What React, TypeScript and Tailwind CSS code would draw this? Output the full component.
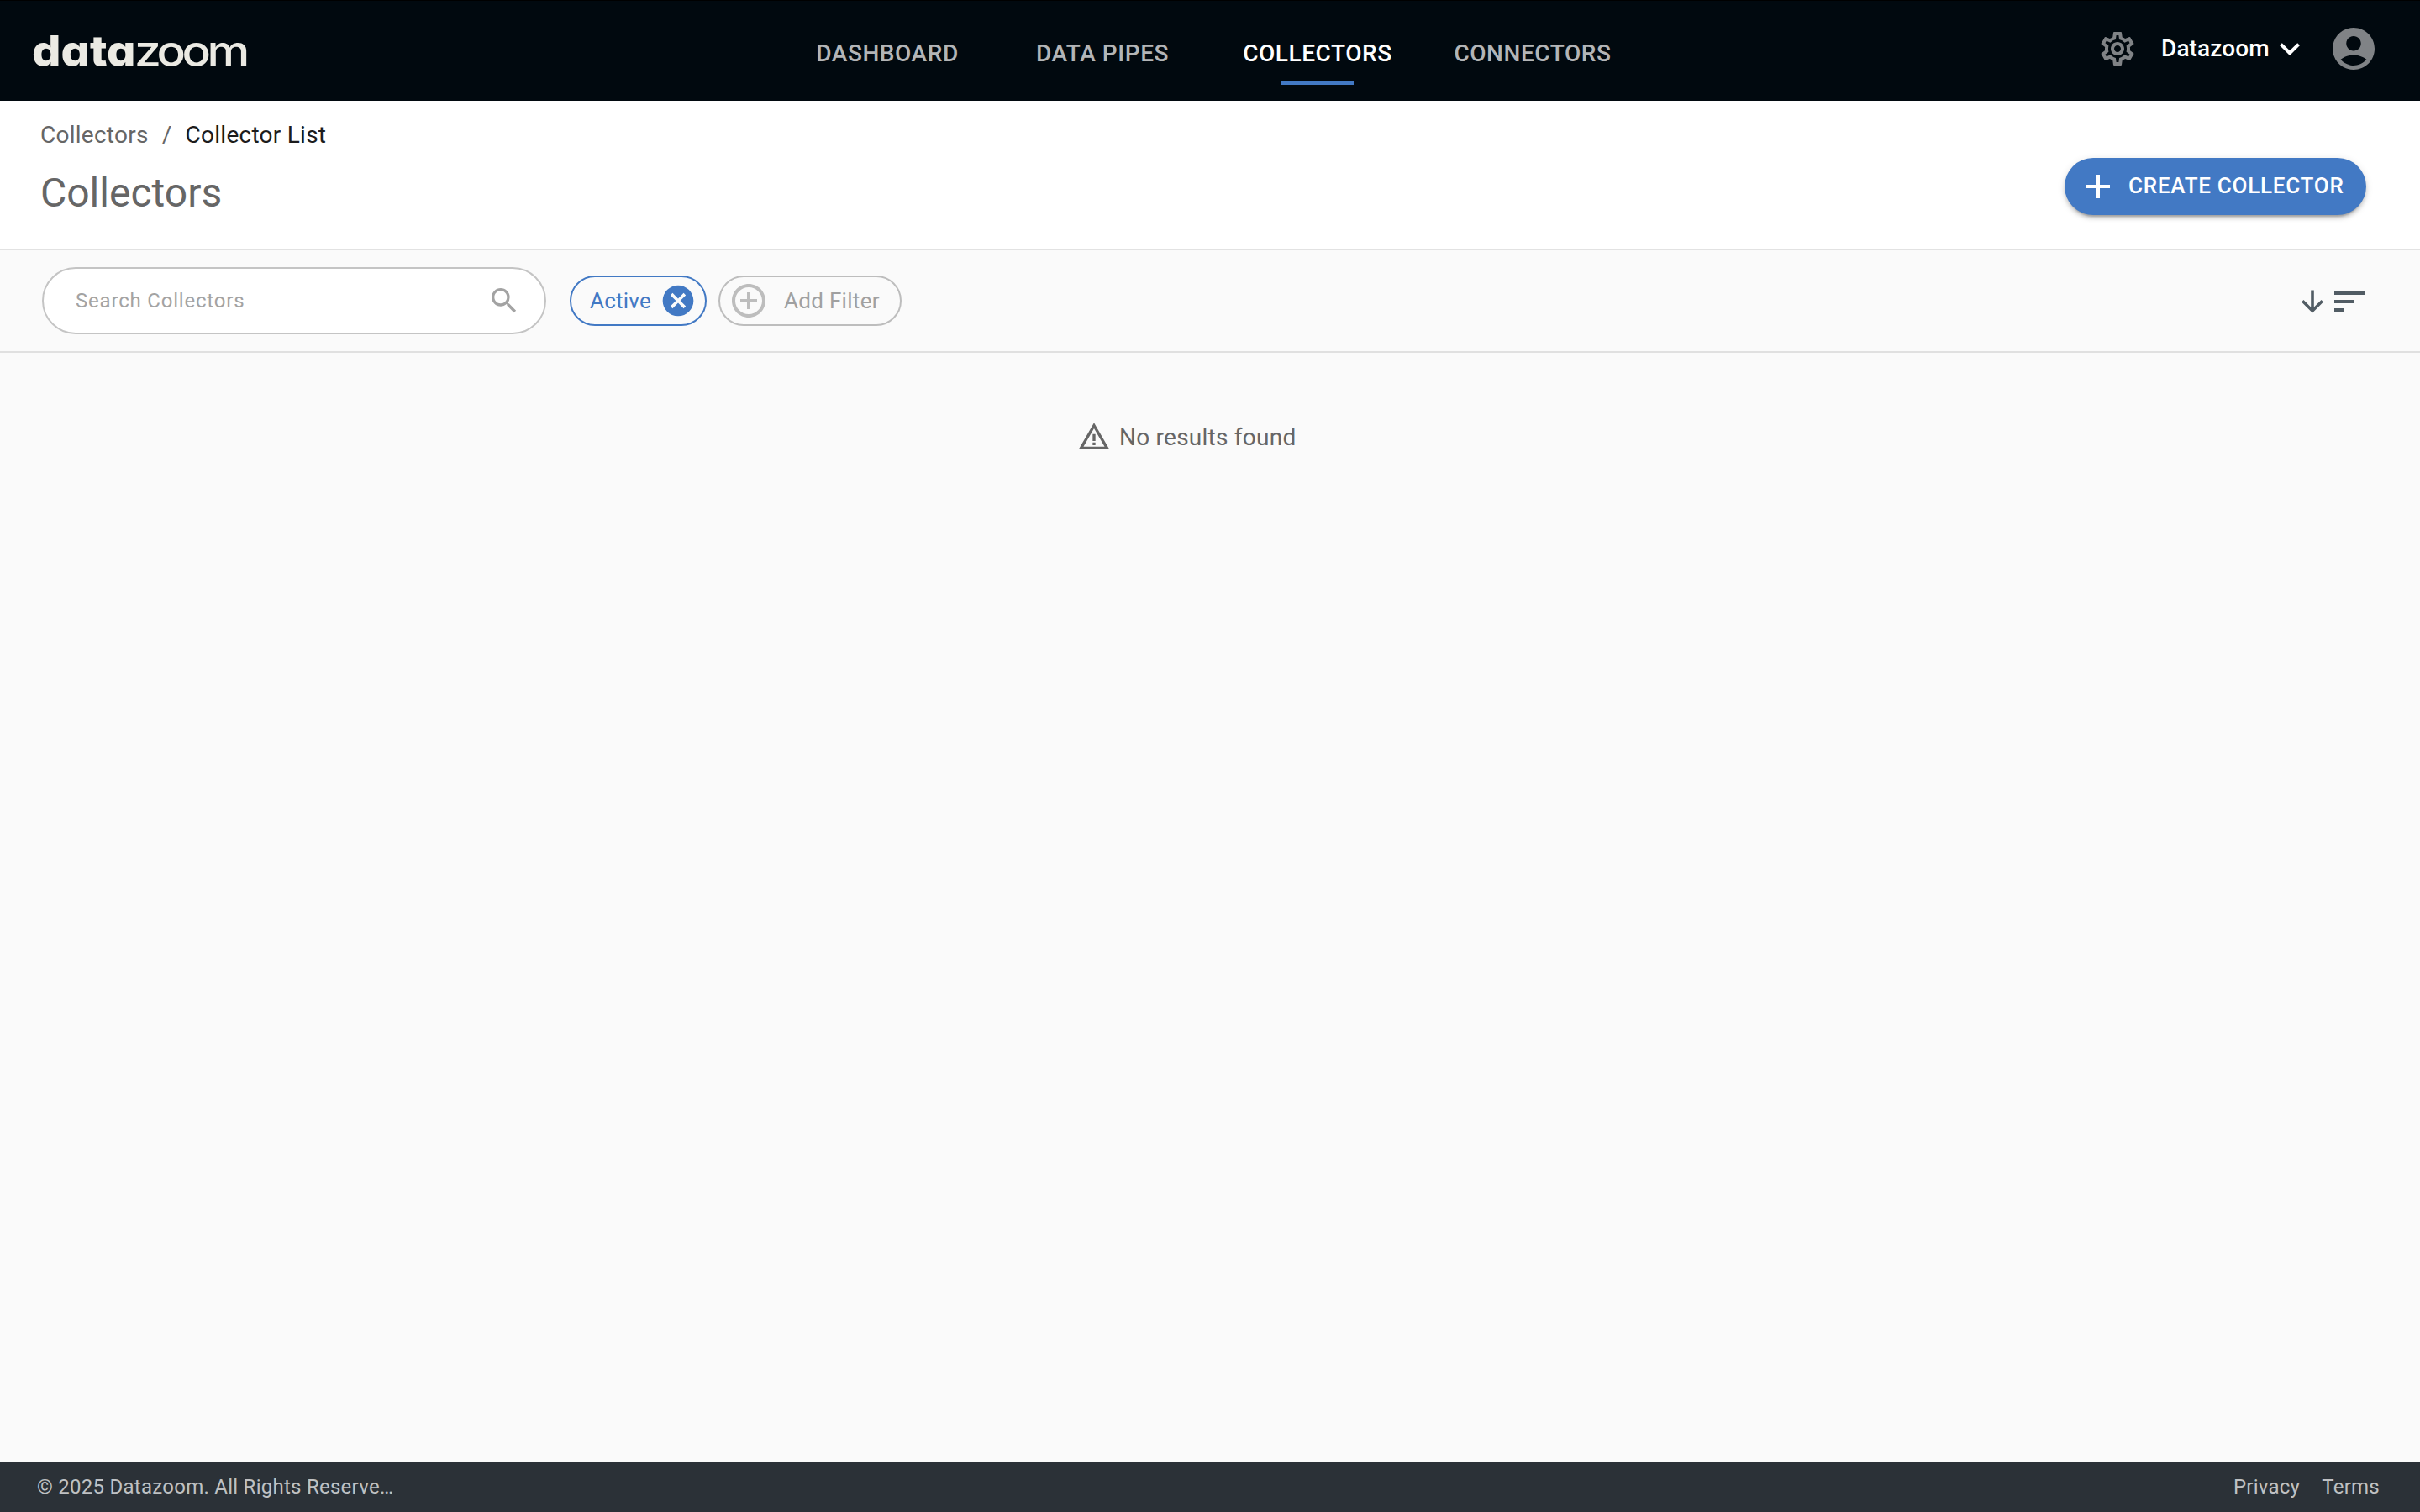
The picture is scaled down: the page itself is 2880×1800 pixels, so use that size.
import React from 'react';
import {
  MdAdd,
  MdAddCircleOutline,
  MdCancel,
  MdExpandMore,
  MdOutlineSettings,
  MdSearch,
  MdSort,
  MdWarningAmber,
} from 'react-icons/md';

const tabs = ['Dashboard', 'Data Pipes', 'Collectors', 'Connectors'];

// cv11 gives Inter a single-storey "a"
const Logo: React.FC = () => (
  <div className="flex font-[Inter,sans-serif] text-[51px] leading-[60px] text-[#ebeae3] [font-feature-settings:'cv11']">
    <span className="w-[122px] origin-left scale-x-[1.06] font-extrabold">data</span>
    <span className="origin-left scale-x-[1.12] font-medium tracking-[-4px]">zoom</span>
  </div>
);

const AccountIcon: React.FC = () => (
  <svg viewBox="0 0 24 24" className="h-[60px] w-[60px] fill-[#808386]">
    <path d="M12 2C6.48 2 2 6.48 2 12s4.48 10 10 10 10-4.48 10-10S17.52 2 12 2zm0 4c1.93 0 3.5 1.57 3.5 3.5S13.93 13 12 13s-3.5-1.57-3.5-3.5S10.07 6 12 6zm0 14c-2.03 0-4.43-.82-6.14-2.88C7.55 15.8 9.68 15 12 15s4.45.8 6.14 2.12C16.43 19.18 14.03 20 12 20z" />
  </svg>
);

const ArrowDownIcon: React.FC = () => (
  <svg viewBox="0 0 26 28" className="h-7 w-[26px]" fill="none" stroke="currentColor" strokeWidth="3.6">
    <path d="M13 0.5V25M1.2 13.2L13 25l11.8-11.8" />
  </svg>
);

const Header: React.FC = () => (
  <header className="grid h-[120px] shrink-0 grid-cols-[928px_1024px_928px] border-t border-black bg-[#01090f]">
    <div className="pl-[38px] pt-[30px]">
      <Logo />
    </div>

    <nav className="grid grid-cols-4">
      {tabs.map((tab) => {
        const active = tab === 'Collectors';
        return (
          <a
            key={tab}
            className={`flex flex-col items-center pt-[43px] text-[28px] font-medium uppercase leading-[40px] tracking-[0.56px] ${
              active ? 'text-white' : 'text-[#b3b5b7]'
            }`}
          >
            {tab}
            {active && <span className="mt-3 h-[5px] w-[86px] bg-[#4279c4]" />}
          </a>
        );
      })}
    </nav>

    <div className="flex h-[114px] items-center justify-end pr-[49px]">
      <MdOutlineSettings className="h-12 w-12 text-[#808386]" />
      <div className="ml-[27px] flex items-center text-[28px] font-medium text-white">
        <span className="w-[130px] pl-px tracking-[0.1px]">Datazoom</span>
        <MdExpandMore className="h-12 w-12" />
      </div>
      <div className="ml-[22px]">
        <AccountIcon />
      </div>
    </div>
  </header>
);

const PageTitle: React.FC = () => (
  <section className="flex h-[178px] shrink-0 justify-between border-b-2 border-[#e2e2e2] bg-white pl-12 pr-16">
    <div>
      <div className="flex pt-[21px] text-[28px] leading-[40px] tracking-[0.26px] text-[#666666]">
        <a>Collectors</a>
        <span className="mx-4">/</span>
        <span className="text-[#1c1c1c]">Collector List</span>
      </div>
      <h1 className="mt-[21px] text-[48px] leading-[56px] text-[#666666]">Collectors</h1>
    </div>
    <button className="mt-[68px] flex h-[68px] w-[359px] items-center rounded-full bg-[#4279c4] pl-4 text-[26px] font-medium uppercase tracking-[0.74px] text-white shadow-[0_6px_2px_-4px_rgba(0,0,0,0.2),0_4px_4px_rgba(0,0,0,0.14),0_2px_10px_rgba(0,0,0,0.12)]">
      <MdAdd className="h-12 w-12" />
      <span className="ml-3 -mt-0.5 whitespace-nowrap">Create Collector</span>
    </button>
  </section>
);

const FilterBar: React.FC = () => (
  <section className="flex h-[122px] shrink-0 items-center border-b-2 border-[#e0e0e0] pl-[50px] pr-[60px]">
    <div className="flex h-20 w-[600px] items-center justify-between rounded-full border-2 border-[#c4c4c4] bg-white pl-[38px] pr-7 text-[#a3a3a3]">
      <span className="text-[24px] tracking-[0.8px]">Search Collectors</span>
      <MdSearch className="h-10 w-10" />
    </div>
    <div className="ml-7 flex h-[60px] w-[163px] items-center justify-between rounded-full border-2 border-[#4279c4] pl-[22px] pr-2.5 text-[26px] tracking-[0.24px] text-[#4279c4]">
      <span>Active</span>
      <MdCancel className="h-11 w-11" />
    </div>
    <div className="ml-3.5 flex h-[60px] w-[218px] items-center rounded-full border-2 border-[#bdbdbd] pl-2.5 text-[26px] tracking-[0.3px] text-[#a0a0a0]">
      <MdAddCircleOutline className="h-12 w-12 text-[#bdbdbd]" />
      <span className="ml-[18px] whitespace-nowrap">Add Filter</span>
    </div>
    <div className="ml-auto flex items-center gap-[7px] pt-0.5 text-[#515c64]">
      <ArrowDownIcon />
      <MdSort className="h-12 w-12" />
    </div>
  </section>
);

const Footer: React.FC = () => (
  <footer className="flex h-[60px] shrink-0 items-center justify-between bg-[#2b3137] pl-11 pr-12 text-[24px] tracking-[0.26px] text-[#bfc1c3]">
    <span>© 2025 Datazoom. All Rights Reserve…</span>
    <div className="flex gap-[26px]">
      <a>Privacy</a>
      <a>Terms</a>
    </div>
  </footer>
);

export default function App() {
  return (
    <div className="flex h-[1800px] w-[2880px] flex-col bg-[#fafafa] font-[Roboto,sans-serif]">
      <Header />
      <PageTitle />
      <FilterBar />
      <main className="flex flex-1 items-start pl-[1282px] pt-20">
        <div className="flex items-start gap-2.5 text-[28px] leading-[40px] tracking-[0.24px] text-[#666666]">
          <MdWarningAmber className="h-10 w-10" />
          <span className="pt-px">No results found</span>
        </div>
      </main>
      <Footer />
    </div>
  );
}
